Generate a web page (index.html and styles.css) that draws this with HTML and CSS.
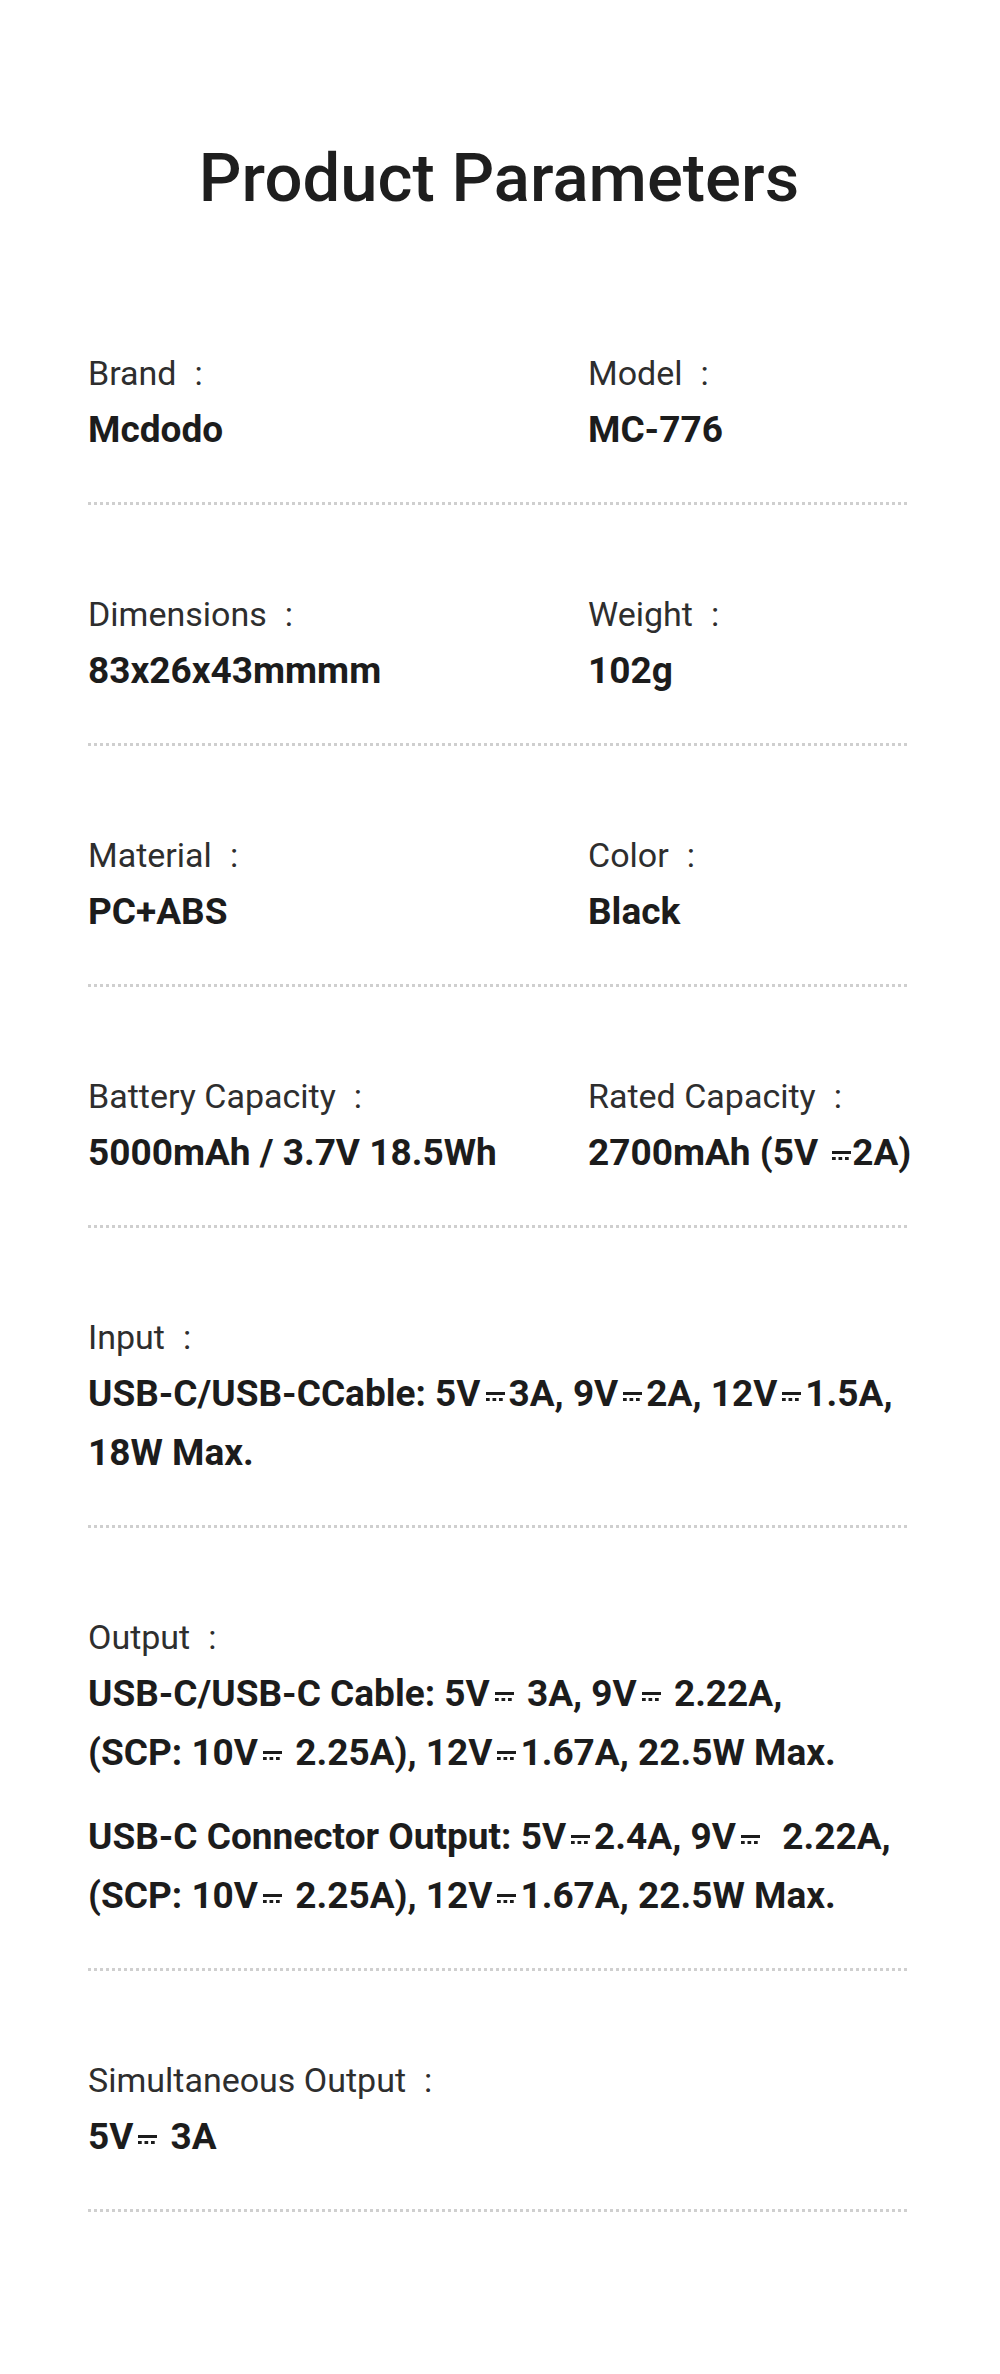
FILE: index.html
```html
<!DOCTYPE html>
<html lang="en">
<head>
<meta charset="utf-8">
<title>Product Parameters</title>
<link rel="stylesheet" href="styles.css">
</head>
<body>
<main class="page">
  <h1 class="title">Product Parameters</h1>

  <section class="row two">
    <div class="cell">
      <div class="label">Brand<span class="colon">:</span></div>
      <div class="value">Mcdodo</div>
    </div>
    <div class="cell">
      <div class="label">Model<span class="colon">:</span></div>
      <div class="value">MC-776</div>
    </div>
  </section>

  <section class="row two">
    <div class="cell">
      <div class="label">Dimensions<span class="colon">:</span></div>
      <div class="value">83x26x43mmmm</div>
    </div>
    <div class="cell">
      <div class="label">Weight<span class="colon">:</span></div>
      <div class="value">102g</div>
    </div>
  </section>

  <section class="row two">
    <div class="cell">
      <div class="label">Material<span class="colon">:</span></div>
      <div class="value">PC+ABS</div>
    </div>
    <div class="cell">
      <div class="label">Color<span class="colon">:</span></div>
      <div class="value">Black</div>
    </div>
  </section>

  <section class="row two">
    <div class="cell">
      <div class="label">Battery Capacity<span class="colon">:</span></div>
      <div class="value">5000mAh / 3.7V 18.5Wh</div>
    </div>
    <div class="cell">
      <div class="label">Rated Capacity<span class="colon">:</span></div>
      <div class="value">2700mAh (5V <span class="dc tight-r"></span>2A)</div>
    </div>
  </section>

  <section class="row">
    <div class="cell">
      <div class="label">Input<span class="colon">:</span></div>
      <div class="value">USB-C/USB-CCable: 5V<span class="dc"></span>3A, 9V<span class="dc"></span>2A, 12V<span class="dc"></span>1.5A,<br>18W Max.</div>
    </div>
  </section>

  <section class="row">
    <div class="cell">
      <div class="label">Output<span class="colon">:</span></div>
      <div class="value">USB-C/USB-C Cable: 5V<span class="dc"></span> 3A, 9V<span class="dc"></span> 2.22A,<br>(SCP: 10V<span class="dc"></span> 2.25A), 12V<span class="dc"></span>1.67A, 22.5W Max.</div>
      <div class="value para">USB-C Connector Output: 5V<span class="dc"></span>2.4A, 9V<span class="dc"></span>&nbsp; 2.22A,<br>(SCP: 10V<span class="dc"></span> 2.25A), 12V<span class="dc"></span>1.67A, 22.5W Max.</div>
    </div>
  </section>

  <section class="row">
    <div class="cell">
      <div class="label">Simultaneous Output<span class="colon">:</span></div>
      <div class="value">5V<span class="dc"></span> 3A</div>
    </div>
  </section>
</main>
</body>
</html>
```

FILE: styles.css
```css
* {
  box-sizing: border-box;
}

html, body {
  margin: 0;
  padding: 0;
  background: #ffffff;
}

body {
  font-family: Roboto, "Noto Sans", "Liberation Sans", sans-serif;
  color: #1c1c1c;
}

.page {
  width: 1000px;
  min-height: 2374px;
  padding: 0 90px 0 88px;
}

.title {
  margin: 0;
  padding-top: 138px;
  padding-bottom: 46px;
  font-size: 67px;
  line-height: 80px;
  font-weight: 500;
  text-align: center;
  color: #1e1e1e;
}

.row {
  padding: 82px 0 46px;
  background-image: linear-gradient(to right, #cfcfcf 50%, rgba(255,255,255,0) 50%);
  background-size: 6px 3px;
  background-repeat: repeat-x;
  background-position: 0 100%;
}

.row.two {
  display: grid;
  grid-template-columns: 500px 1fr;
}

.label {
  font-size: 34px;
  line-height: 54px;
  font-weight: 400;
  color: #2e2e2e;
  white-space: nowrap;
}

.colon {
  margin-left: 18px;
}

.value {
  font-size: 37px;
  line-height: 59px;
  font-weight: 700;
  color: #1c1c1c;
  white-space: nowrap;
}

.value.para {
  margin-top: 25px;
}

.dc {
  display: inline-block;
  width: 19px;
  height: 9px;
  margin: 0 4px 0 5px;
  vertical-align: 0.13em;
  border-top: 3px solid #1c1c1c;
  background-image: linear-gradient(to right, #1c1c1c 62%, rgba(255,255,255,0) 62%);
  background-size: 6.5px 3px;
  background-repeat: repeat-x;
  background-position: 0 100%;
}

.dc.tight-r {
  margin-right: 1px;
}
```
